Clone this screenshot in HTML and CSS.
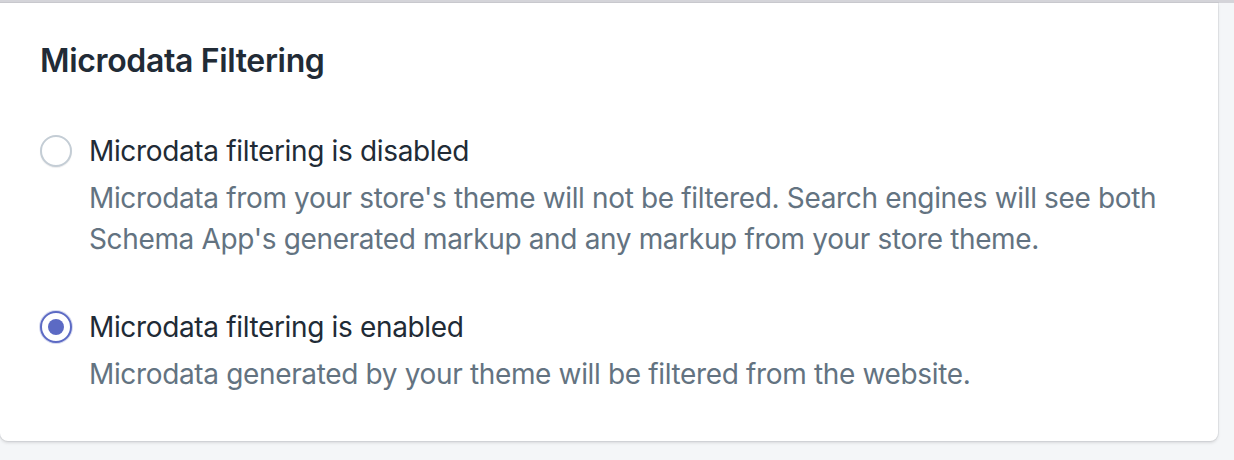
FILE: index.html
```html
<!DOCTYPE html>
<html lang="en">
<head>
<meta charset="utf-8">
<title>Microdata Filtering</title>
<link rel="stylesheet" href="styles.css">
</head>
<body>
<div class="page">
  <section class="card">
    <h2 class="card-title">Microdata Filtering</h2>
    <ul class="choices">
      <li class="choice">
        <label class="choice-label">
          <span class="radio"></span>
          <span class="label-text">Microdata filtering is disabled</span>
        </label>
        <p class="help">Microdata from your store's theme will not be filtered. Search engines will see both<br>Schema App's generated markup and any markup from your store theme.</p>
      </li>
      <li class="choice">
        <label class="choice-label">
          <span class="radio radio-checked"></span>
          <span class="label-text">Microdata filtering is enabled</span>
        </label>
        <p class="help">Microdata generated by your theme will be filtered from the website.</p>
      </li>
    </ul>
  </section>
</div>
</body>
</html>
```

FILE: styles.css
```css
html, body {
  margin: 0;
  padding: 0;
  background: #f4f6f8;
}

body {
  font-family: "Inter", "Liberation Sans", sans-serif;
  color: #212b36;
  letter-spacing: -0.35px;
  -webkit-font-smoothing: antialiased;
}

.page {
  border-top: 3px solid #d4d4d9;
  padding-right: 16px;
  min-height: 457px;
  box-sizing: border-box;
}

.card {
  background: #ffffff;
  border-radius: 0 0 8px 8px;
  box-shadow: 0 0 0 1px rgba(63, 63, 68, 0.07), 0 2px 3px 0 rgba(63, 63, 68, 0.15);
  padding: 34px 40px 46px 40px;
}

.card-title {
  margin: 0;
  font-size: 32px;
  line-height: 48px;
  font-weight: 600;
  color: #212b36;
}

.choices {
  list-style: none;
  margin: 46px 0 0 0;
  padding: 0;
  display: flex;
  flex-direction: column;
  gap: 47px;
}

.choice-label {
  display: flex;
  align-items: center;
  gap: 17px;
  font-size: 28px;
  line-height: 40px;
  color: #212b36;
}

.radio {
  width: 32px;
  height: 32px;
  box-sizing: border-box;
  border-radius: 50%;
  border: 2px solid #c4cdd5;
  background: #ffffff;
  box-shadow: 0 1px 1px rgba(22, 29, 37, 0.08);
  flex: none;
  display: flex;
  align-items: center;
  justify-content: center;
}

.radio-checked {
  border-color: #5c6ac4;
  box-shadow: 0 0 0 1px rgba(92, 106, 196, 0.25);
}

.radio-checked::after {
  content: "";
  width: 16px;
  height: 16px;
  border-radius: 50%;
  background: #5c6ac4;
}

.help {
  margin: 7px 0 0 49px;
  font-size: 28px;
  line-height: 41px;
  color: #637381;
  white-space: nowrap;
}
```
